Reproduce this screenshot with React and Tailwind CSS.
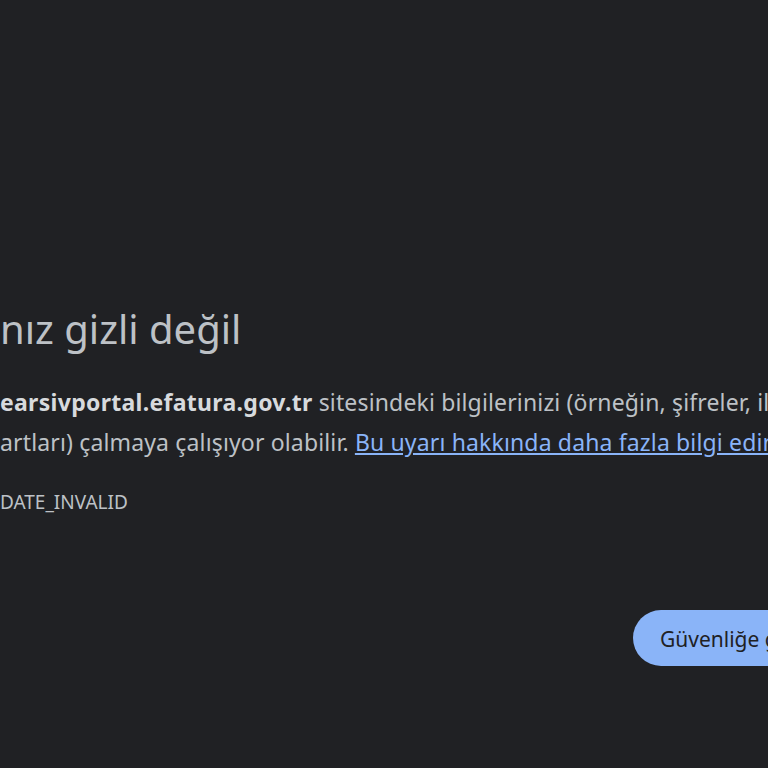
import React from 'react';

const font = { fontFamily: '"Noto Sans", "Open Sans", sans-serif' };

export default function App() {
  return (
    <div className="h-screen w-full overflow-hidden bg-[#202124] text-[#bdc1c6]" style={font}>
      <div className="pt-[305px] whitespace-nowrap">
        {/* title, cut off on the left like the screenshot */}
        <h1 className="text-[40px] leading-[48px] font-normal text-[#bdc1c6]">nız gizli değil</h1>

        <div className="mt-[29px] text-[23px] leading-[40px] tracking-[0.15px]">
          <p>
            <span className="font-bold tracking-[0.3px] text-[#d7dadd]">earsivportal.efatura.gov.tr</span> sitesindeki bilgilerinizi (örneğin, şifreler, iletiler
          </p>
          <p>
            artları) çalmaya çalışıyor olabilir.{' '}
            <a href="#" className="text-[#8ab4f8] underline underline-offset-2">Bu uyarı hakkında daha fazla bilgi edinin</a>
          </p>
        </div>

        <div className="mt-[28px] text-[19px] leading-[24px] text-[#bdc1c6]">DATE_INVALID</div>

        <div className="mt-[96px] flex justify-start pl-[633px]">
          <button className="h-[56px] shrink-0 rounded-full bg-[#8ab4f8] pl-[27px] pr-8 pt-1 text-[21px] text-[#202124]">
            Güvenliğe geri dön
          </button>
        </div>
      </div>
    </div>
  );
}
